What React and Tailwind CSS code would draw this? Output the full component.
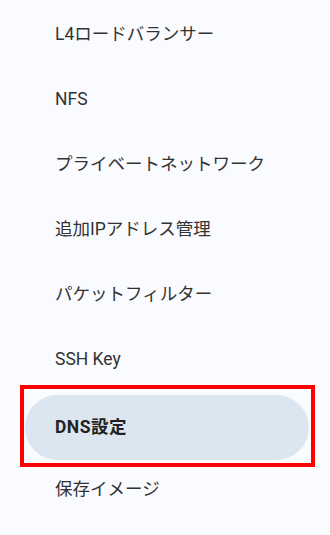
import React from "react";

const items = [
  "L4ロードバランサー",
  "NFS",
  "プライベートネットワーク",
  "追加IPアドレス管理",
  "パケットフィルター",
  "SSH Key",
  "DNS設定",
  "保存イメージ",
];

export default function App() {
  return (
    <div
      className="w-[330px] h-[535px] overflow-hidden bg-[#fafbfe] pt-[2px] text-[#333]"
      style={{ fontFamily: '"Roboto", "Noto Sans CJK JP", sans-serif' }}
    >
      <ul className="flex flex-col">
        {items.map((label) => {
          const active = label === "DNS設定";
          return (
            <li key={label} className="relative h-[65px]">
              {active && (
                <div className="absolute left-[20px] top-[-7px] w-[295px] h-[82px] border-4 border-[#ff0000] z-10" />
              )}
              <div
                className={
                  active
                    ? "flex items-center h-[65px] mt-[3px] ml-[25px] mr-[21px] pl-[30px] rounded-full bg-[#dce6f1] font-bold text-[17.5px] tracking-[0.5px] text-[#222]"
                    : "flex items-center h-full pl-[55px] text-[17.5px]"
                }
              >
                {label}
              </div>
            </li>
          );
        })}
      </ul>
    </div>
  );
}
